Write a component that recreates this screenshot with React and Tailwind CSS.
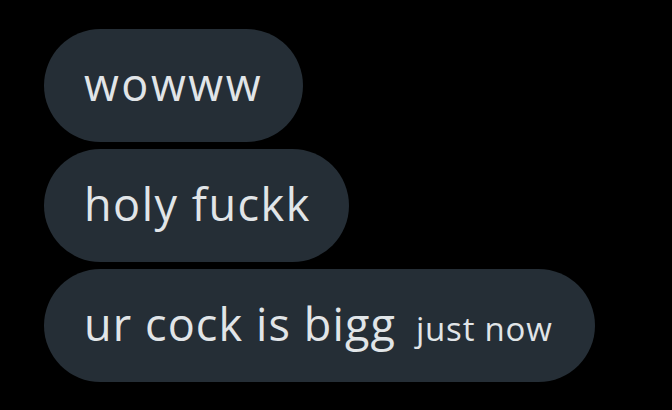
export default function App() {
  const font = { fontFamily: '"Open Sans", "Noto Sans", sans-serif' };
  return (
    <div className="h-[410px] w-[672px] bg-black pl-[44px] pt-[29px]" style={font}>
      <div className="flex flex-col items-start gap-[7px] text-[#e1e5e8]">
        <div className="flex h-[113px] items-center rounded-full bg-[#252e36] px-[40px] pb-[4px] text-[45px] tracking-[2.5px]">
          wowww
        </div>
        <div className="flex h-[113px] items-center rounded-full bg-[#252e36] pl-[40px] pr-[38px] pb-[4px] text-[45px] tracking-[1.5px]">
          holy fuckk
        </div>
        <div className="flex h-[113px] items-baseline rounded-full bg-[#252e36] pl-[40px] pr-[42px] pt-[21px]">
          <span className="text-[45px] tracking-[1.1px]">ur cock is bigg</span>
          <span className="ml-[20px] text-[33px] tracking-[0.8px]">just now</span>
        </div>
      </div>
    </div>
  );
}
